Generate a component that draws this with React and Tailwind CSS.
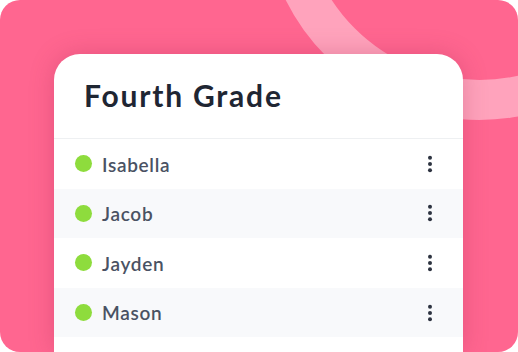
const students = ["Isabella", "Jacob", "Jayden", "Mason", ""];

const Kebab = () => (
  <svg width="8" height="20" viewBox="0 0 8 20" className="text-[#2d3340]">
    <circle cx="4" cy="3.8" r="2" fill="currentColor" />
    <circle cx="4" cy="10" r="2" fill="currentColor" />
    <circle cx="4" cy="16.2" r="2" fill="currentColor" />
  </svg>
);

export default function App() {
  return (
    <div
      className="relative w-[518px] h-[352px] overflow-hidden rounded-[20px] bg-[#ff6690]"
      style={{ fontFamily: "Lato, 'Noto Sans', sans-serif" }}
    >
      {/* ring decoration */}
      <div className="absolute left-[263px] top-[-313px] w-[433px] h-[433px] rounded-full border-[40px] border-[#ffa3bc]" />

      <div className="relative ml-[54px] mt-[54px] w-[409px] h-[298px] flex flex-col bg-white rounded-t-[26px] shadow-[0_0_24px_rgba(150,30,70,0.25)] overflow-hidden">
        {/* Header */}
        <div className="h-[85px] shrink-0 flex items-center pl-[30px] pb-[2px] border-b border-[#eef0f2]">
          <h2 className="text-[30px] font-bold text-[#1f2633] tracking-[1.8px]">
            Fourth Grade
          </h2>
        </div>

        {/* Rows */}
        {students.map((name, i) => (
          <div
            key={i}
            className={`h-[49.6px] shrink-0 flex items-center pl-[21px] pr-[29px] ${
              i % 2 === 1 ? "bg-[#f8f9fb]" : "bg-white"
            }`}
          >
            {name && (
              <>
                <span className="w-[17px] h-[17px] rounded-full bg-[#8edc3d]" />
                <span className="ml-[10px] pt-[2px] text-[19px] font-semibold text-[#4a5263] tracking-[0.7px]">
                  {name}
                </span>
                <span className="ml-auto flex">
                  <Kebab />
                </span>
              </>
            )}
          </div>
        ))}
      </div>
    </div>
  );
}
